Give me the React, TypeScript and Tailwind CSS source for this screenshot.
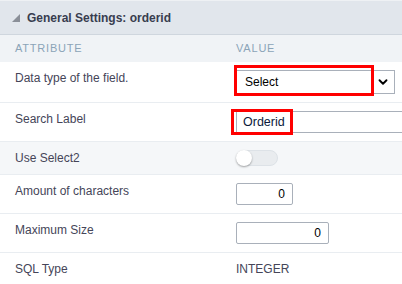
import { ChevronDown } from 'lucide-react'
import type { ReactNode } from 'react'

interface RowProps {
  label: string
  children: ReactNode
  className?: string
}

function Row({ label, children, className = '' }: RowProps) {
  return (
    <div className={`flex border-b border-[#e9edf1] ${className}`}>
      <div className="w-[236px] shrink-0 pl-[15px] pt-[9px] text-[12px] leading-[14px] text-[#454558]">
        {label}
      </div>
      <div className="flex-1 pb-[8px] pt-[8px]">{children}</div>
    </div>
  )
}

export default function App() {
  return (
    <div className="h-[284px] w-[402px] overflow-hidden bg-white font-['Liberation_Sans',Arial,sans-serif]">
      <div className="flex h-[35px] items-center gap-[7px] border-t border-[#eef1f4] border-b border-b-[#cfd6de] bg-[#e1e6ec] pl-[12px]">
        <svg width="8" height="8" viewBox="0 0 8 8" className="mt-[1px]">
          <polygon points="8,0 8,8 0,8" fill="#8a8f98" />
        </svg>
        <span className="text-[12px] font-bold text-[#383d4f]">General Settings: orderid</span>
      </div>
      <div className="flex h-[27px] items-center bg-[#f0f3f6] text-[11px] tracking-[0.8px] text-[#8ba4b8]">
        <div className="w-[236px] pl-[15px]">ATTRIBUTE</div>
        <div>VALUE</div>
      </div>

      <Row label="Data type of the field.">
        <div className="relative h-[24px] w-[159px]">
          <div className="flex h-full w-full items-center justify-between border border-[#a9b0ba] bg-white pl-[8px] pr-[4px] text-[12px] text-black">
            <span>Select</span>
            <ChevronDown size={14} strokeWidth={3.2} className="text-black" />
          </div>
          <div className="absolute left-[-2px] top-[-5px] h-[31px] w-[140px] border-[3px] border-[#ff0000]" />
        </div>
      </Row>

      <Row label="Search Label">
        <div className="relative h-[22px]">
          <div className="flex h-full items-center border border-r-0 border-[#a9b0ba] pl-[6px] text-[12.5px] text-[#0b1a3c]">
            Orderid
          </div>
          <div className="absolute left-[-5px] top-[-2px] h-[26px] w-[62px] border-[3px] border-[#ff0000]" />
        </div>
      </Row>

      <Row label="Use Select2" className="bg-[#f5f7f9]">
        <div className="relative h-[16px] w-[42px] rounded-full border border-[#dde2e7] bg-[#e9ecef]">
          <div className="absolute left-[-1px] top-[-1px] h-[16px] w-[16px] rounded-full bg-white shadow-[0_1px_2px_rgba(0,0,0,0.35)]" />
        </div>
      </Row>

      <Row label="Amount of characters">
        <div className="flex h-[22px] w-[57px] items-center justify-end rounded-[2px] border border-[#a9b0ba] pr-[7px] text-[12px] text-black">
          0
        </div>
      </Row>

      <Row label="Maximum Size">
        <div className="flex h-[22px] w-[93px] items-center justify-end rounded-[2px] border border-[#a9b0ba] pr-[7px] text-[12px] text-black">
          0
        </div>
      </Row>

      <Row label="SQL Type" className="border-b-0">
        <div className="pt-[1px] text-[12px] leading-[14px] text-[#454558]">INTEGER</div>
      </Row>
    </div>
  )
}
